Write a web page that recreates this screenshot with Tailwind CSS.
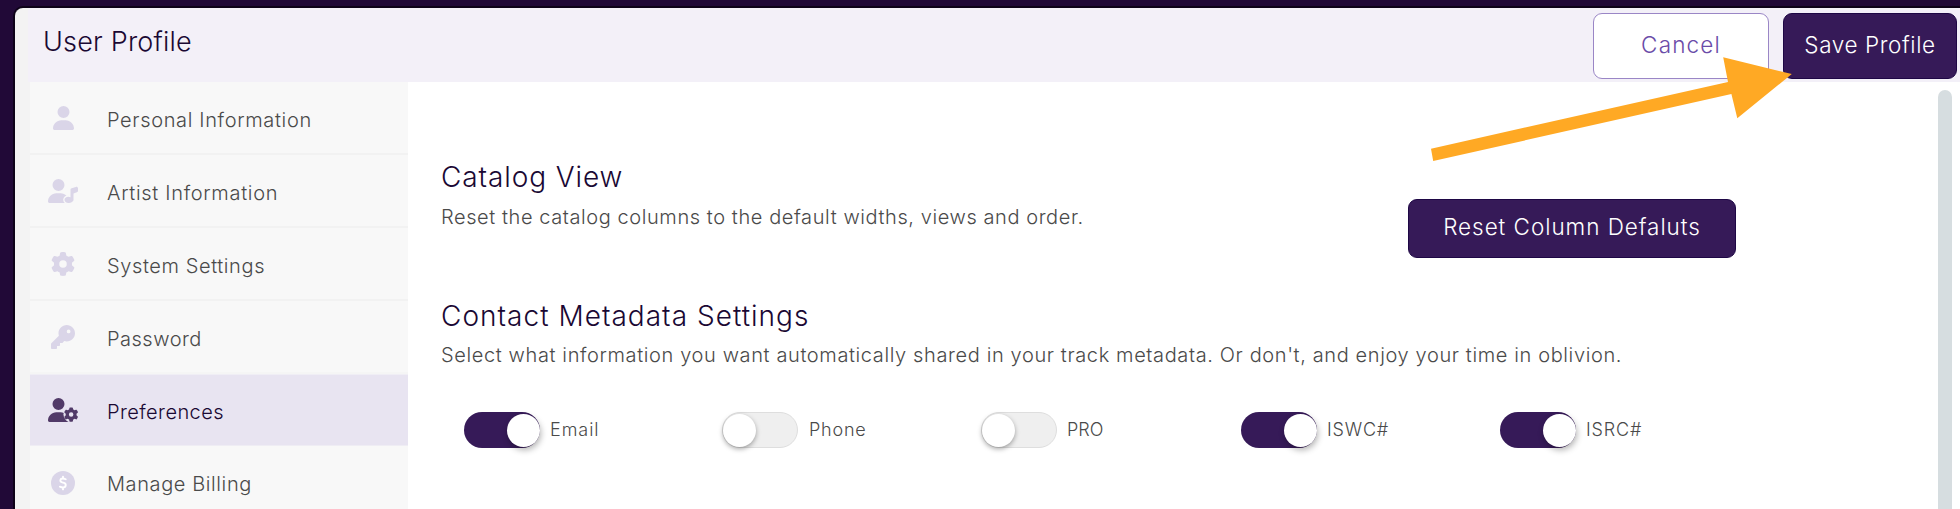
<!DOCTYPE html>
<html lang="en">
<head>
    <meta charset="UTF-8">
    <meta name="viewport" content="width=device-width, initial-scale=1.0">
    <title>User Profile</title>
    <script src="https://cdn.jsdelivr.net/npm/@tailwindcss/browser@4"></script>
</head>
<body class="h-[509px] overflow-hidden bg-[#210937] pt-[6px] pl-[13px] font-['Inter',sans-serif] font-light text-[#4a4a4a]">
    <div class="h-[503px] overflow-hidden rounded-tl-[10px] border-t-2 border-l-2 border-[#0d0218] bg-[#f3f3f3] pl-[13px]">

        <!-- Header -->
        <header class="flex h-[74px] items-start justify-between bg-[#f3f0f8] pl-[15px] pr-[3px]">
            <h1 class="pt-[14px] text-[27px] leading-[40px] tracking-[0.2px] text-[#1a0833]">User Profile</h1>
            <div class="flex gap-[14px] pt-[5px] text-[22.5px]">
                <button class="h-[66px] w-[176px] rounded-[9px] border border-[#9a86c6] bg-white pb-[3px] tracking-[1.15px] text-[#6a4ba8]">Cancel</button>
                <button class="h-[66px] w-[174px] rounded-[9px] border border-[#1e0745] bg-[#361a58] pb-[3px] tracking-[0.6px] text-white">Save Profile</button>
            </div>
        </header>

        <div class="flex h-[427px]">
            <!-- Sidebar -->
            <nav class="ml-[2px] w-[378px] shrink-0 bg-[#f8f8f8] text-xl">
                <a class="flex h-[73px] items-center border-b-2 border-[#f2f2f2]">
                    <span class="flex w-[66px] justify-center text-[#dad5e8]">
                        <svg class="h-6" viewBox="0 0 448 512" fill="currentColor"><path d="M224 256A128 128 0 1 0 224 0a128 128 0 1 0 0 256zm-45.7 48C79.8 304 0 383.8 0 482.3C0 498.7 13.3 512 29.7 512H418.3c16.4 0 29.7-13.3 29.7-29.7C448 383.8 368.2 304 269.7 304H178.3z"/></svg>
                    </span>
                    <span class="pt-[5px] pl-[11px] tracking-[0.65px]">Personal Information</span>
                </a>
                <a class="flex h-[73px] items-center border-b-2 border-[#f2f2f2]">
                    <span class="flex w-[66px] justify-center text-[#dad5e8]">
                        <svg class="h-6" viewBox="0 0 640 512" fill="currentColor">
                            <path d="M224 256A128 128 0 1 0 224 0a128 128 0 1 0 0 256zm-45.7 48C79.8 304 0 383.8 0 482.3C0 498.7 13.3 512 29.7 512H418.3c16.4 0 29.7-13.3 29.7-29.7C448 383.8 368.2 304 269.7 304H178.3z"/>
                            <g stroke="#f8f8f8" stroke-width="56"><ellipse cx="432" cy="443" rx="80" ry="66"/></g>
                            <path d="M352 443c0-38 36-66 80-66 17 0 33 4 48 10V232c0-16 9-29 24-34l90-30c23-8 46 8 46 32v50c0 16-10 29-25 34l-71 24v135c0 38-52 69-112 69-44 0-80-31-80-69z"/>
                        </svg>
                    </span>
                    <span class="pt-[5px] pl-[11px] tracking-[0.68px]">Artist Information</span>
                </a>
                <a class="flex h-[73px] items-center border-b-2 border-[#f2f2f2]">
                    <span class="flex w-[66px] justify-center text-[#dad5e8]">
                        <svg class="h-6" viewBox="0 0 512 512" fill="currentColor"><path id="gear" d="M495.9 166.6c3.2 8.7 .5 18.4-6.4 24.6l-43.3 39.4c1.1 8.3 1.7 16.8 1.7 25.4s-.6 17.1-1.7 25.4l43.3 39.4c6.9 6.2 9.6 15.9 6.4 24.6c-4.4 11.9-9.7 23.3-15.8 34.3l-4.7 8.1c-6.6 11-14 21.4-22.1 31.2c-5.9 7.2-15.7 9.6-24.5 6.8l-55.7-17.7c-13.4 10.3-28.2 18.9-44 25.4l-12.5 57.1c-2 9.1-9 16.3-18.2 17.8c-13.8 2.3-28 3.5-42.5 3.5s-28.7-1.2-42.5-3.5c-9.2-1.5-16.2-8.7-18.2-17.8l-12.5-57.1c-15.8-6.5-30.6-15.1-44-25.4L83.1 425.9c-8.8 2.8-18.6 .3-24.5-6.8c-8.1-9.8-15.5-20.2-22.1-31.2l-4.7-8.1c-6.1-11-11.4-22.4-15.8-34.3c-3.2-8.7-.5-18.4 6.4-24.6l43.3-39.4C64.6 273.1 64 264.6 64 256s.6-17.1 1.7-25.4L22.4 191.2c-6.9-6.2-9.6-15.9-6.4-24.6c4.4-11.9 9.7-23.3 15.8-34.3l4.7-8.1c6.6-11 14-21.4 22.1-31.2c5.9-7.2 15.7-9.6 24.5-6.8l55.7 17.7c13.4-10.3 28.2-18.9 44-25.4l12.5-57.1c2-9.1 9-16.3 18.2-17.8C227.3 1.2 241.5 0 256 0s28.7 1.2 42.5 3.5c9.2 1.5 16.2 8.7 18.2 17.8l12.5 57.1c15.8 6.5 30.6 15.1 44 25.4l55.7-17.7c8.8-2.8 18.6-.3 24.5 6.8c8.1 9.8 15.5 20.2 22.1 31.2l4.7 8.1c6.1 11 11.4 22.4 15.8 34.3zM256 336a80 80 0 1 0 0-160 80 80 0 1 0 0 160z"/></svg>
                    </span>
                    <span class="pt-[5px] pl-[11px] tracking-[0.6px]">System Settings</span>
                </a>
                <a class="flex h-[73px] items-center border-b-2 border-[#f5f5f5]">
                    <span class="flex w-[66px] justify-center text-[#dad5e8]">
                        <svg class="h-6" viewBox="0 0 512 512" fill="currentColor"><path d="M336 352c97.2 0 176-78.8 176-176S433.2 0 336 0S160 78.8 160 176c0 18.7 2.9 36.8 8.3 53.7L7 391c-4.5 4.5-7 10.6-7 17v80c0 13.3 10.7 24 24 24h80c13.3 0 24-10.7 24-24V448h40c13.3 0 24-10.7 24-24V384h40c6.4 0 12.5-2.5 17-7l33.3-33.3c16.9 5.4 35 8.3 53.7 8.3zM376 96a40 40 0 1 1 0 80 40 40 0 1 1 0-80z"/></svg>
                    </span>
                    <span class="pt-[4px] pl-[11px] tracking-[0.5px]">Password</span>
                </a>
                <a class="flex h-[72px] items-center border-y border-t-[#f0eef5] border-b-[#efedf4] bg-[#e8e4f1] text-[#1a0833]">
                    <span class="flex w-[66px] justify-center text-[#513a68]">
                        <svg class="h-6" viewBox="0 0 640 512" fill="currentColor">
                            <path d="M224 256A128 128 0 1 0 224 0a128 128 0 1 0 0 256zm-45.7 48C79.8 304 0 383.8 0 482.3C0 498.7 13.3 512 29.7 512H418.3c16.4 0 29.7-13.3 29.7-29.7C448 383.8 368.2 304 269.7 304H178.3z"/>
                            <circle cx="494" cy="354" r="164" fill="#e8e4f1"/>
                            <use href="#gear" transform="translate(340 200) scale(.6)"/>
                        </svg>
                    </span>
                    <span class="pt-[3px] pl-[11px] tracking-[0.42px]">Preferences</span>
                </a>
                <a class="flex h-[73px] items-center">
                    <span class="flex w-[66px] justify-center text-[#dad5e8]">
                        <svg class="h-6" viewBox="0 0 512 512" fill="none">
                            <circle cx="256" cy="256" r="256" fill="currentColor"/>
                            <path d="M256 120v34M256 358v34M314 176c-20-10-40-16-60-16-66 0-72 68-16 84l38 11c56 16 50 97-20 97-26 0-46-8-66-18" stroke="#fff" stroke-width="40" stroke-linecap="round"/>
                        </svg>
                    </span>
                    <span class="pt-[3px] pl-[11px] tracking-[0.6px]">Manage Billing</span>
                </a>
            </nav>

            <!-- Content -->
            <main class="flex grow justify-between bg-white pl-[33px] pr-[8px]">
                <div>
                    <section class="flex items-start pt-[75px]">
                        <div class="w-[967px]">
                            <h2 class="text-[28px] leading-[40px] tracking-[0.9px] text-[#1a0833]">Catalog View</h2>
                            <p class="mt-[4px] text-xl leading-[32px] tracking-[0.58px]">Reset the catalog columns to the default widths, views and order.</p>
                        </div>
                        <button class="mt-[42px] h-[59px] w-[328px] rounded-[9px] border border-[#1e0745] bg-[#361a58] pb-[3px] text-[22.5px] tracking-[0.95px] text-white">Reset Column Defaluts</button>
                    </section>
                    <section class="mt-[38px]">
                        <h2 class="text-[28px] leading-[40px] tracking-[1.02px] text-[#1a0833]">Contact Metadata Settings</h2>
                        <p class="mt-[3px] text-xl leading-[32px] tracking-[0.62px]">Select what information you want automatically shared in your track metadata. Or don't, and enjoy your time in oblivion.</p>
                        <div class="mt-[41px] flex pl-[23px] text-lg">
                            <label class="flex w-[258px] items-center">
                                <span class="flex h-[36px] w-[76px] items-center justify-end rounded-full bg-[#361a58]"><i class="size-[33px] rounded-full bg-white shadow-[1px_3px_6px_rgba(0,0,0,0.3)]"></i></span>
                                <span class="pl-[10px] tracking-[0.95px]">Email</span>
                            </label>
                            <label class="flex w-[259px] items-center">
                                <span class="flex h-[36px] w-[76px] items-center rounded-full border border-[#dedede] bg-[#efefef]"><i class="size-[33px] rounded-full bg-white shadow-[0_2px_5px_rgba(0,0,0,0.35)]"></i></span>
                                <span class="pl-[11px] tracking-[0.8px]">Phone</span>
                            </label>
                            <label class="flex w-[260px] items-center">
                                <span class="flex h-[36px] w-[76px] items-center rounded-full border border-[#dedede] bg-[#efefef]"><i class="size-[33px] rounded-full bg-white shadow-[0_2px_5px_rgba(0,0,0,0.35)]"></i></span>
                                <span class="pl-[10px]">PRO</span>
                            </label>
                            <label class="flex w-[259px] items-center">
                                <span class="flex h-[36px] w-[76px] items-center justify-end rounded-full bg-[#361a58]"><i class="size-[33px] rounded-full bg-white shadow-[1px_3px_6px_rgba(0,0,0,0.3)]"></i></span>
                                <span class="pl-[10px] tracking-[0.8px]">ISWC#</span>
                            </label>
                            <label class="flex items-center">
                                <span class="flex h-[36px] w-[76px] items-center justify-end rounded-full bg-[#361a58]"><i class="size-[33px] rounded-full bg-white shadow-[1px_3px_6px_rgba(0,0,0,0.3)]"></i></span>
                                <span class="pl-[10px] tracking-[0.85px]">ISRC#</span>
                            </label>
                        </div>
                    </section>
                </div>
                <!-- Scrollbar -->
                <div class="mt-[8px] w-[14px] rounded-t-full bg-[#d6dde0]"></div>
            </main>
        </div>
    </div>

    <!-- Arrow pointing at Save Profile -->
    <svg class="pointer-events-none absolute top-[57px] left-[1431px]" width="361" height="105" viewBox="0 0 361 105" fill="#ffa924">
        <path d="M0 91.7L297 25L292.2 .3L360.8 17L306.3 61.3L300.4 37L2.2 104Z"/>
    </svg>
</body>
</html>
